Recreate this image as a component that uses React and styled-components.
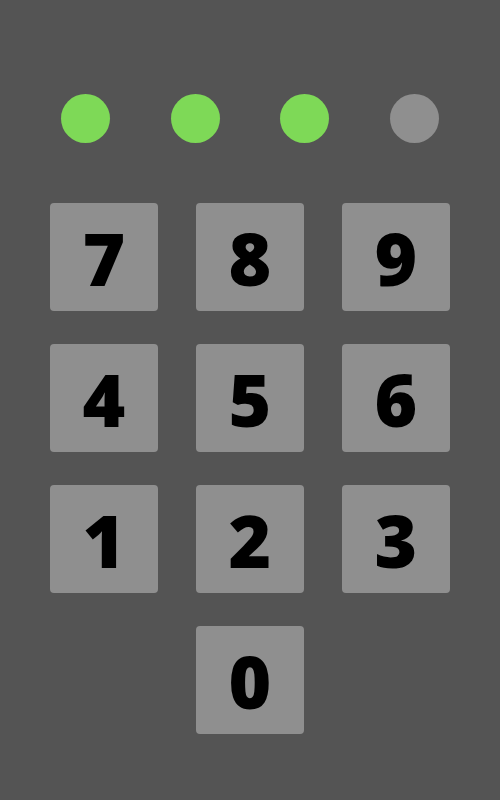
import styled, { createGlobalStyle } from "styled-components"

const GlobalStyle = createGlobalStyle`
    body {
        margin: 0;
        background: #545454;
        font-family: "Open Sans", "Liberation Sans", sans-serif;
    }
`

const Screen = styled.div`
    width: 500px;
    height: 800px;
    background: #545454;
    display: flex;
    flex-direction: column;
    align-items: center;
`

const DotRow = styled.div`
    width: 100%;
    box-sizing: border-box;
    padding: 94px 0 0;
    display: flex;
    justify-content: space-evenly;
`

const Dot = styled.div`
    width: 49px;
    height: 49px;
    border-radius: 50%;
    background: ${({filled}) => (filled ? "#7ed957" : "#8f8f8f")};
`

const Pad = styled.div`
    display: grid;
    grid-template-columns: repeat(3, 108px);
    grid-auto-rows: 108px;
    column-gap: 38px;
    row-gap: 33px;
    margin-top: 60px;
`

const Key = styled.button`
    grid-column: ${({col}) => col || "auto"};
    border: none;
    border-radius: 4px;
    background: #8f8f8f;
    color: #000;
    font-family: "Open Sans", "Liberation Sans", sans-serif;
    font-weight: 800;
    font-size: 73px;
    line-height: 1;
    padding: 0;
    display: flex;
    align-items: center;
    justify-content: center;
    cursor: pointer;
`

const entered = 3
const keys = ["7", "8", "9", "4", "5", "6", "1", "2", "3"]

export default function App() {
    return (
        <Screen>
            <GlobalStyle />
            <DotRow>
                {[0, 1, 2, 3].map((i) => (
                    <Dot key={i} filled={i < entered} />
                ))}
            </DotRow>
            <Pad>
                {keys.map((k) => (
                    <Key key={k}>{k}</Key>
                ))}
                <Key col="2">0</Key>
            </Pad>
        </Screen>
    )
}
